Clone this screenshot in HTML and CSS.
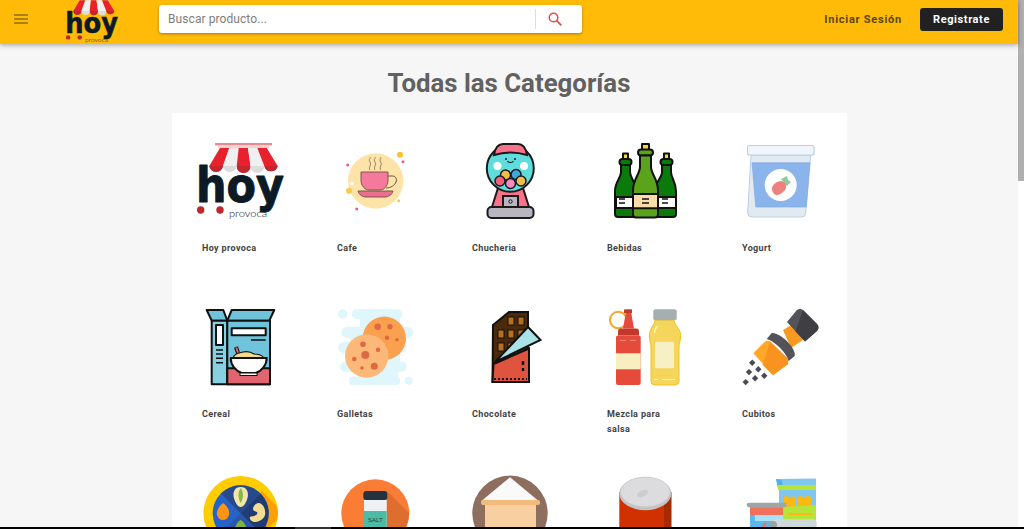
FILE: index.html
```html
<!DOCTYPE html>
<html lang="es">
<head>
  <meta charset="UTF-8" />
  <title>Hoy provoca - Categorías</title>
  <link rel="stylesheet" href="styles.css">
</head>
<body>
  <svg class="defs" aria-hidden="true">
    <defs>
      <symbol id="logo" viewBox="194 141 93 80">
        <rect x="215" y="143" width="57" height="2.4" fill="#e88a90"/>
        <rect x="218" y="145.4" width="51" height="3" fill="#f6cfd1"/>
        <path d="M220 148h9.3l-6.3 18a6.9 6.9 0 0 1-13.7 0z" fill="#e8222c"/>
        <path d="M229.3 148h9.4l-2 18a6.9 6.9 0 0 1-13.7 0z" fill="#f0f0f0"/>
        <path d="M238.7 148h9.3l2.5 18a6.9 6.9 0 0 1-13.8 0z" fill="#e8222c"/>
        <path d="M248 148h9.3l7 18a6.9 6.9 0 0 1-13.8 0z" fill="#f0f0f0"/>
        <path d="M257.3 148h9.4l11 18a6.9 6.9 0 0 1-13.4 0z" fill="#e8222c"/>
        <path d="M209.3 166a6.9 6.9 0 0 0 13.7 0z M236.7 166a6.9 6.9 0 0 0 13.8 0z M264.3 166a6.9 6.9 0 0 0 13.4 0z" fill="#c2262e"/>
        <path d="M223 166a6.9 6.9 0 0 0 13.7 0z M250.5 166a6.9 6.9 0 0 0 13.8 0z" fill="#dcdcdc"/>
        <text class="logo-word" x="196" y="202" textLength="88" lengthAdjust="spacingAndGlyphs">hoy</text>
        <circle cx="200.7" cy="210" r="3.7" fill="#c0262d"/>
        <circle cx="220" cy="210" r="3.7" fill="#c0262d"/>
        <text class="logo-sub" x="229" y="217" textLength="38" lengthAdjust="spacingAndGlyphs">provoca</text>
      </symbol>
    </defs>
  </svg>

  <div class="view">
    <div class="content">
      <header class="topbar">
        <svg class="menu-icon" viewBox="0 0 14 10"><path d="M0 1h14M0 5h14M0 9h14" stroke="#8f6d0b" stroke-width="1.5"/></svg>
        <svg class="top-logo"><use href="#logo"/></svg>
        <div class="search">
          <span class="search-text">Buscar producto...</span>
          <span class="search-btn">
            <svg viewBox="0 0 14 14" width="14" height="14"><circle cx="5.5" cy="5.5" r="4.3" fill="none" stroke="#e5484d" stroke-width="1.5"/><path d="M8.7 8.7l4.6 4.6" stroke="#e5484d" stroke-width="1.8"/></svg>
          </span>
        </div>
        <a class="login">Iniciar Sesión</a>
        <a class="register">Registrate</a>
      </header>

      <main class="main">
        <h1 class="title">Todas las Categorías</h1>
        <div class="cat-grid">

          <div class="cat">
            <svg class="cat-icon" viewBox="172 139 135 82"><use href="#logo" x="194" y="141" width="93" height="80"/></svg>
            <p>Hoy provoca</p>
          </div>

          <div class="cat">
            <svg class="cat-icon" viewBox="307 139 135 82">
              <circle cx="375.7" cy="181" r="27.7" fill="#fde3a7"/>
              <path d="M370 170c-2-3 2-5 0-8s1-3 0-5M375 170c-2-3 2-5 0-8s1-3 0-5M380.7 170c-2-3 2-5 0-8s1-3 0-5" fill="none" stroke="#85695a" stroke-width=".8"/>
              <path d="M388 176h4c4 0 5 3 4 6s-5 6-10 6" fill="none" stroke="#6e4f45" stroke-width="1"/>
              <path d="M361 172h27v8c0 6-4 10-8 10h-11c-4 0-8-4-8-10z" fill="#f4799b" stroke="#6e4f45" stroke-width=".9"/>
              <path d="M358 191h35c-1 4-5 6-8 6h-19c-3 0-7-2-8-6z" fill="#ec6f90" stroke="#6e4f45" stroke-width=".9"/>
              <circle cx="400" cy="154.7" r="3" fill="#fbc02d"/>
              <circle cx="403" cy="161.7" r="1.5" fill="#ef5b7f"/>
              <circle cx="347.7" cy="165" r="1.5" fill="#ef5b7f"/>
              <circle cx="349" cy="190.7" r="3" fill="#fbc94a"/>
              <circle cx="352" cy="183.5" r="1.8" fill="#fff"/>
              <circle cx="356.7" cy="209" r="1.5" fill="#ef5b7f"/>
              <circle cx="398.7" cy="200.7" r="1.5" fill="#fbc94a"/>
            </svg>
            <p>Cafe</p>
          </div>

          <div class="cat">
            <svg class="cat-icon" viewBox="442 139 135 82">
              <g stroke="#1a1a1a" stroke-width="2">
                <path d="M498 188h25l6 19h-37z" fill="#f9728a"/>
                <rect x="503" y="196" width="15" height="11" fill="#b9b5c0"/>
                <rect x="487.5" y="207" width="46" height="11" rx="4" fill="#b9b5c0"/>
                <circle cx="510.3" cy="168.3" r="23.5" fill="#5fdcdc"/>
                <path d="M494 155c1-6 4-11 9-11h15c5 0 8 5 9 11-10-3-23-3-33 0z" fill="#f9728a"/>
              </g>
              <circle cx="510.5" cy="201.5" r="1.7" fill="none" stroke="#1a1a1a"/>
              <circle cx="497.5" cy="166" r="4" fill="#fff"/>
              <circle cx="524" cy="166" r="4" fill="#fff"/>
              <path d="M507.5 161c1 2 5 2 6 0" fill="none" stroke="#1a1a1a" stroke-width="1.2"/>
              <circle cx="506" cy="159" r="1" fill="#1a1a1a"/>
              <circle cx="515" cy="159" r="1" fill="#1a1a1a"/>
              <g stroke="#1a1a1a" stroke-width="1.5">
                <circle cx="505.5" cy="175" r="5" fill="#f2bd4b"/>
                <circle cx="516" cy="174.5" r="5" fill="#3da8e0"/>
                <circle cx="500" cy="181" r="5" fill="#f0607e"/>
                <circle cx="521" cy="181" r="5" fill="#f2bd4b"/>
                <circle cx="510.5" cy="183.5" r="5" fill="#f48cc4"/>
              </g>
            </svg>
            <p>Chucheria</p>
          </div>

          <div class="cat">
            <svg class="cat-icon" viewBox="577 139 135 82">
              <g stroke="#111" stroke-width="2" stroke-linejoin="round">
                <rect x="623" y="153.5" width="5" height="6" fill="#fbd13d"/>
                <rect x="619.5" y="159" width="12" height="6" rx="3" fill="#0a7a0a"/>
                <path d="M621 165h9v7c0 6 6 10 6 19v23a3 3 0 0 1-3 3h-15a3 3 0 0 1-3-3v-23c0-9 6-13 6-19z" fill="#0a7a0a"/>
                <rect x="664" y="153.5" width="5" height="6" fill="#fbd13d"/>
                <rect x="660.5" y="159" width="12" height="6" rx="3" fill="#0a7a0a"/>
                <path d="M662 165h9v7c0 6 5 10 5 19v23a3 3 0 0 1-3 3h-15a3 3 0 0 1-3-3v-23c0-9 7-13 7-19z" fill="#0a7a0a"/>
                <path d="M616 197h20v11h-20zM655 197h21v11h-21z" fill="#fff"/>
                <rect x="642" y="144" width="7" height="6" fill="#fbd13d"/>
                <rect x="638" y="149.5" width="15" height="6" rx="3" fill="#5aa31a"/>
                <path d="M640 155.5h11v11c0 8 7 12 7 24v24a3 3 0 0 1-3 3h-19a3 3 0 0 1-3-3v-24c0-12 7-16 7-24z" fill="#5aa31a"/>
                <rect x="633" y="194" width="25" height="14.3" fill="#fddcab"/>
              </g>
              <path d="M642 199h7M642 203h7M625 199h-6M625 203h-6M662 199h6M662 203h6" stroke="#111" stroke-width="1.5"/>
            </svg>
            <p>Bebidas</p>
          </div>

          <div class="cat">
            <svg class="cat-icon" viewBox="712 139 135 82">
              <path d="M751 155h59.7l-5 58a4 4 0 0 1-4 4h-50a4 4 0 0 1-4-4z" fill="#e1e9f1" stroke="#bccfe3" stroke-width="1"/>
              <path d="M752 162.7h58l-3.8 44.3h-50.4z" fill="#8bb4ec" stroke="#7ba6df" stroke-width=".6"/>
              <rect x="747.5" y="145.5" width="66.5" height="9.5" rx="2" fill="#f0f6fc" stroke="#bccfe3" stroke-width="1.2"/>
              <circle cx="780.7" cy="185" r="16" fill="#fff"/>
              <path d="M781 179l6-3 1 4 3 2-4 4z" fill="#90c9a0"/>
              <path d="M772 190c-1-5 5-9 9-9 3 0 6 3 5 7-1 3-5 6-8 7s-5-2-6-5z" fill="#f08080"/>
            </svg>
            <p>Yogurt</p>
          </div>

          <div class="cat">
            <svg class="cat-icon" viewBox="172 305 135 82">
              <g stroke="#111" stroke-width="2" stroke-linejoin="round">
                <path d="M206.7 310h16.6l4 10.7h-15.6z" fill="#6fc3da"/>
                <path d="M231.7 310h42.6l-5 10.7h-42z" fill="#6fc3da"/>
                <rect x="211.7" y="320.7" width="15.6" height="63.6" fill="#86d0e2"/>
                <rect x="227.3" y="320.7" width="42.7" height="63.6" fill="#6fc3da"/>
                <path d="M227.3 368.3H270v16h-42.7z" fill="#e0656f"/>
                <rect x="231.7" y="328.3" width="34" height="7" fill="#fff"/>
                <rect x="216" y="325" width="7" height="20" fill="#fff"/>
                <path d="M236 347l3 9" stroke-width="4"/>
              </g>
              <path d="M236.3 347.5l2.6 8" stroke="#e0656f" stroke-width="2"/>
              <path d="M251 340h14.7M216 350h7M216 354h7M216 358.3h7M216 362.7h7" stroke="#111" stroke-width="1.5"/>
              <path d="M233 358c2-6 8-5 10-6 4-1 8 0 11 2 4 0 8 1 10 4z" fill="#f2dc8a" stroke="#111" stroke-width="1.2"/>
              <path d="M230 358h36.7c0 7-5 13-11 15h-14c-6-2-11-8-11-15z" fill="#fff" stroke="#111" stroke-width="2"/>
              <rect x="240" y="373" width="17" height="2.5" fill="#fff" stroke="#111" stroke-width="1"/>
            </svg>
            <p>Cereal</p>
          </div>

          <div class="cat">
            <svg class="cat-icon" viewBox="307 305 135 82">
              <g fill="#dff6fc">
                <rect x="351.7" y="309.3" width="50.6" height="10" rx="5"/>
                <rect x="360" y="316" width="40" height="14"/>
                <rect x="341.7" y="326.7" width="71.6" height="11.3" rx="5.6"/>
                <rect x="338.3" y="341.7" width="68.4" height="11.6" rx="5.8"/>
                <rect x="350" y="336" width="50" height="30"/>
                <rect x="340" y="361.7" width="66.7" height="10" rx="5"/>
                <rect x="349" y="376.7" width="51" height="8.3" rx="4.1"/>
                <rect x="358" y="370" width="40" height="8"/>
                <circle cx="342.7" cy="314" r="4.7"/>
                <circle cx="408.7" cy="380.7" r="4"/>
              </g>
              <circle cx="384.3" cy="338.3" r="21.7" fill="#fba04e"/>
              <g fill="#dd6a42">
                <circle cx="377.7" cy="326.7" r="3.3"/>
                <circle cx="390" cy="326.7" r="2.7"/>
                <circle cx="387" cy="337.7" r="2.2"/>
                <circle cx="397" cy="339.7" r="1.8"/>
              </g>
              <circle cx="366.7" cy="356" r="21.7" fill="#fbb878"/>
              <g fill="#dd6a42">
                <circle cx="363" cy="344.3" r="2.8"/>
                <circle cx="378" cy="349.7" r="2.2"/>
                <circle cx="365.3" cy="355" r="4"/>
                <circle cx="354.3" cy="359" r="2.3"/>
                <circle cx="374.3" cy="366.3" r="3.5"/>
                <circle cx="362" cy="368" r="1.8"/>
              </g>
            </svg>
            <p>Galletas</p>
          </div>

          <div class="cat">
            <svg class="cat-icon" viewBox="442 305 135 82">
              <path d="M493 325l16-13h19v70h-35.5z" fill="#4a2a0a" stroke="#111" stroke-width="2"/>
              <g fill="#b8701c" stroke="#111" stroke-width="1">
                <rect x="508" y="317" width="6" height="8"/>
                <rect x="518" y="317" width="6" height="8"/>
                <rect x="498" y="330" width="6" height="8"/>
                <rect x="508" y="330" width="6" height="8"/>
                <rect x="518" y="330" width="6" height="8"/>
                <rect x="498" y="343" width="6" height="8"/>
                <rect x="508" y="343" width="6" height="8"/>
              </g>
              <path d="M528 327l12.5 13-45.5 22z" fill="#a9e3e8" stroke="#111" stroke-width="2"/>
              <path d="M493.5 364l35.5-15.5v33.5h-36.5z" fill="#e0533f" stroke="#111" stroke-width="2"/>
              <path d="M494 379h33" stroke="#111" stroke-width="2" stroke-dasharray="2 2"/>
              <path d="M523 361v4M523 368v3" stroke="#111" stroke-width="2.5"/>
            </svg>
            <p>Chocolate</p>
          </div>

          <div class="cat">
            <svg class="cat-icon" viewBox="577 305 135 82">
              <circle cx="618.3" cy="320" r="8.3" fill="none" stroke="#f5a623" stroke-width="2"/>
              <path d="M625.5 309.5h6v5l2.5 14h-11l2.5-14z" fill="#e64a3b"/>
              <rect x="624" y="309.5" width="8" height="3.5" fill="#c0392b"/>
              <path d="M621 328.5h15a3 3 0 0 1 3 3v4h-21v-4a3 3 0 0 1 3-3z" fill="#c0392b"/>
              <rect x="616" y="335.5" width="24.7" height="49.5" rx="2" fill="#e64a3b"/>
              <rect x="616" y="353.3" width="24.7" height="16" fill="#f8efc0"/>
              <path d="M620 340.5h6M630 340.5h6" stroke="#f28b7e" stroke-width="1.2"/>
              <path d="M655 320h19c0 5 6.7 8 6.7 16 0 5-1.700 7-1.700 11v34a4 4 0 0 1-4 4h-20a4 4 0 0 1-4-4v-34c0-4-1.700-6-1.700-11 0-8 5.700-11 5.700-16z" fill="#f6d55c" stroke="#f2c31a" stroke-width="1"/>
              <rect x="653.3" y="309.3" width="23.4" height="11" rx="2" fill="#a5aeb0"/>
              <rect x="655" y="341.7" width="19" height="26.6" rx="1" fill="#f7f0c4"/>
              <path d="M654.5 333c0-3 1-5 3-7" fill="none" stroke="#fff6c8" stroke-width="1.5"/>
              <path d="M654 379.5h4M662 379.5h13" stroke="#fff6c8" stroke-width="1.2"/>
            </svg>
            <p>Mezcla para salsa</p>
          </div>

          <div class="cat">
            <svg class="cat-icon" viewBox="712 305 135 82">
              <path d="M783 330l10-6 10 16-12 8z" fill="#f79a1f"/>
              <path d="M753.3 353.3l11-11c2-2 5-2 7 0l15 15c2 2 2 5 1 7l-14 11z" fill="#ffa726"/>
              <path d="M770 342l16.7 15.5c2 2 2 5 1 7l-15 10.500-10-10z" fill="#f7931e"/>
              <path d="M771.7 333l-5 6c8 2 20 14 22 22l6-5c2-8-15-24-23-23z" fill="#55535a"/>
              <path d="M787 322l9.5-11.500c2-2 5-2 7 0l13.500 13.500c2 2 2 5 0 7l-12 10.500z" fill="#55535a"/>
              <path d="M803 310l14 14c2 2 2 5 0 7l-12 10.500-9.500-10z" fill="#3f3e43"/>
              <g fill="#4a4a50">
                <rect x="750" y="360.5" width="4.5" height="4.5" transform="rotate(45 752.3 362.7)"/>
                <rect x="746.8" y="369.8" width="4.5" height="4.5" transform="rotate(45 749 372)"/>
                <rect x="756" y="367" width="4.5" height="4.5" transform="rotate(45 758.3 369.3)"/>
                <rect x="762" y="373.5" width="4.5" height="4.5" transform="rotate(45 764.3 375.7)"/>
                <rect x="752.8" y="376" width="4.5" height="4.5" transform="rotate(45 755 378.3)"/>
                <rect x="743.5" y="379.8" width="4.5" height="4.5" transform="rotate(45 745.7 382)"/>
              </g>
            </svg>
            <p>Cubitos</p>
          </div>

          <div class="cat">
            <svg class="cat-icon" viewBox="172 471 135 82">
              <circle cx="240.7" cy="513.3" r="37.3" fill="#ffcc00"/>
              <path d="M261 490l16 16c1 4 1 10 0 14l-17 14z" fill="#ff9f00"/>
              <circle cx="240.7" cy="513.3" r="28" fill="#2563c9"/>
              <path d="M240.7 513.3L220.9 493.5a28 28 0 0 1 39.6 0z" fill="#264a8c"/>
              <path d="M240.7 513.3l19.8-19.8a28 28 0 0 1 0 39.6z" fill="#1f3c75"/>
              <path d="M240.7 513.3l19.8 19.8a28 28 0 0 1-39.6 0z" fill="#2a55a8"/>
              <path d="M240.7 487c6 0 8 5 7 10s-4 10-7 10-6-5-7-10 1-10 7-10z" fill="#f3e6a8"/>
              <path d="M240.7 488c3 4 3 10 0 15-3-5-3-11 0-15z" fill="#86b84a"/>
              <path d="M223 503c5 3 7 9 6 12s-3 5-6 5-5-2-6-5 2-9 6-12z" fill="#ff9314"/>
              <path d="M259 503c5 1 7 8 6 12s-6 7-10 7-6-4-5-5 5 0 7-3-4-2-4-5 3-6 6-6z" fill="#f7dc91"/>
              <path d="M240.7 520c5 3 7 9 6 15h-12c-1-6 1-12 6-15z" fill="#7cb342"/>
            </svg>
          </div>

          <div class="cat">
            <svg class="cat-icon" viewBox="307 471 135 82">
              <circle cx="375.3" cy="513.3" r="34" fill="#fb7c35"/>
              <path d="M387 491l22 22a34 34 0 0 1-34 34l12-20z" fill="#dd6e30"/>
              <rect x="364" y="500" width="22.7" height="30" fill="#eef2f4"/>
              <rect x="363.3" y="491" width="24" height="9" rx="3" fill="#26323d"/>
              <rect x="364" y="511" width="22.7" height="20" fill="#4dbba6"/>
              <text class="jar-text" x="375.3" y="521.5" text-anchor="middle">SALT</text>
            </svg>
          </div>

          <div class="cat">
            <svg class="cat-icon" viewBox="442 471 135 82">
              <circle cx="510" cy="513.3" r="37.7" fill="#8d6e5f"/>
              <path d="M510 477.3l28.3 23.4h-56.6z" fill="#fafafa"/>
              <rect x="485" y="503" width="51" height="30" fill="#f8cfa0"/>
              <rect x="481" y="500" width="59" height="5" rx="2" fill="#f2bb7c"/>
            </svg>
          </div>

          <div class="cat">
            <svg class="cat-icon" viewBox="577 471 135 82">
              <rect x="619.3" y="492" width="52" height="40" fill="#d13100"/>
              <rect x="664" y="492" width="7.3" height="40" fill="#a82a00"/>
              <ellipse cx="645.3" cy="493.5" rx="26" ry="16.7" fill="#c4c4c6"/>
              <ellipse cx="645.3" cy="492" rx="24.5" ry="14.5" fill="#dcdcde"/>
              <ellipse cx="642.5" cy="493.5" rx="6" ry="3" fill="#cdcdcf" transform="rotate(-25 642.5 493.5)"/>
            </svg>
          </div>

          <div class="cat">
            <svg class="cat-icon" viewBox="712 471 135 82">
              <path d="M776 479l40-.5v50h-37v-40z" fill="#7ec8f0"/>
              <path d="M776 479l6 1 1 10-5-1z" fill="#4fb0ea"/>
              <rect x="778" y="485" width="38" height="5" fill="#b5e53a"/>
              <g fill="#fdb813">
                <rect x="783" y="496" width="6" height="12" rx="3"/>
                <rect x="790" y="496.5" width="6" height="13" rx="3"/>
                <rect x="797" y="496" width="6" height="12" rx="3"/>
                <rect x="804" y="496" width="7" height="11" rx="3"/>
              </g>
              <path d="M783 507l18-1c5 0 10-1 15-1v18h-33z" fill="#b5e53a"/>
              <rect x="788" y="513" width="24" height="2" fill="#fdb813"/>
              <rect x="750" y="507" width="33" height="25" fill="#5cb8ec"/>
              <rect x="750" y="507.7" width="33" height="7.5" fill="#f0705a"/>
              <path d="M755 515h28v6h-28z" fill="#a8e0f8"/>
              <rect x="746.7" y="502.7" width="40" height="4.5" rx="2.2" fill="#a0a5a8"/>
              <rect x="771.7" y="519.3" width="45" height="12" rx="4" fill="#cfd8d8"/>
              <circle cx="773" cy="525" r="4" fill="#9aa3a5"/>
              <path d="M762 527c1-3 3-5 5-6l-2 6z" fill="#f0705a"/>
            </svg>
          </div>

        </div>
      </main>
    </div>

    <div class="scroll-track"><div class="scroll-thumb"></div></div>
  </div>

  <div class="bottom-bar"><span class="bottom-mark"></span></div>
</body>
</html>
```

FILE: styles.css
```css
* {
  margin: 0;
  padding: 0;
  box-sizing: border-box;
}
html, body {
  height: 100%;
  overflow: hidden;
}
body {
  font-family: Roboto, "Liberation Sans", sans-serif;
  display: flex;
  flex-direction: column;
  background: #fff;
}
.defs {
  display: none;
}
.view {
  flex: 1;
  min-height: 0;
  display: flex;
}
.content {
  flex: 1;
  min-width: 0;
  display: flex;
  flex-direction: column;
  background: #f6f6f6;
}
.scroll-track {
  width: 6px;
  background: #fff;
}
.scroll-thumb {
  height: 181px;
  background: #b0b0b0;
}
.bottom-bar {
  height: 2px;
  flex: none;
  background: #000;
  padding-left: 295px;
}
.bottom-mark {
  display: block;
  width: 36px;
  height: 2px;
  background: #333;
}

/* top bar */
.topbar {
  flex: none;
  height: 44px;
  padding: 0 15px 6px 14px;
  display: flex;
  align-items: center;
  background: #ffbb07;
  box-shadow: 0 1px 5px rgba(0, 0, 0, 0.35);
  position: relative;
  z-index: 2;
}
.menu-icon {
  width: 14px;
  height: 10px;
  flex: none;
}
.top-logo {
  width: 56px;
  height: 48px;
  flex: none;
  align-self: flex-start;
  margin: -4px 0 0 36px;
}
.search {
  width: 423px;
  height: 28px;
  margin-left: 39px;
  display: flex;
  align-items: center;
  background: #fff;
  border-radius: 3px;
  box-shadow: 0 1px 3px rgba(0, 0, 0, 0.35);
}
.search-text {
  flex: 1;
  padding-left: 9px;
  font-size: 12px;
  letter-spacing: 0.08px;
  color: #7d7d7d;
}
.search-btn {
  width: 47px;
  height: 20px;
  padding-right: 8px;
  display: flex;
  align-items: center;
  justify-content: center;
  border-left: 1px solid #ddd;
}
.login {
  margin-left: auto;
  margin-right: 18px;
  font-size: 11px;
  font-weight: 700;
  letter-spacing: 0.75px;
  color: #5b4709;
}
.register {
  width: 83px;
  height: 23px;
  display: flex;
  align-items: center;
  justify-content: center;
  background: #212121;
  border-radius: 3px;
  font-size: 11px;
  font-weight: 700;
  letter-spacing: 0.6px;
  color: #fff;
}

/* categories */
.main {
  flex: 1;
  min-height: 0;
  overflow: hidden;
  padding-top: 22px;
}
.title {
  height: 34px;
  margin-bottom: 13px;
  font-size: 25.8px;
  line-height: 34px;
  font-weight: 700;
  text-align: center;
  color: #616161;
}
.cat-grid {
  width: 675px;
  margin-left: 172px;
  display: grid;
  grid-template-columns: repeat(5, 135px);
  grid-auto-rows: 166px;
  background: #fff;
}
.cat {
  padding-top: 26px;
}
.cat-icon {
  display: block;
  width: 135px;
  height: 82px;
}
.cat p {
  margin-top: 20px;
  padding: 0 30px;
  font-size: 9px;
  line-height: 15px;
  font-weight: 700;
  letter-spacing: 0.36px;
  color: #424242;
}
.logo-word {
  font-family: "DejaVu Sans", sans-serif;
  font-weight: 700;
  font-size: 48px;
  fill: #0b1a24;
  stroke: #0b1a24;
  stroke-width: 1;
  stroke-linejoin: round;
}
.logo-sub {
  font-family: Lato, sans-serif;
  font-weight: 300;
  font-size: 10px;
  fill: #111;
}
.jar-text {
  font-family: "Liberation Sans", sans-serif;
  font-size: 6px;
  fill: #1d3b36;
}
```
